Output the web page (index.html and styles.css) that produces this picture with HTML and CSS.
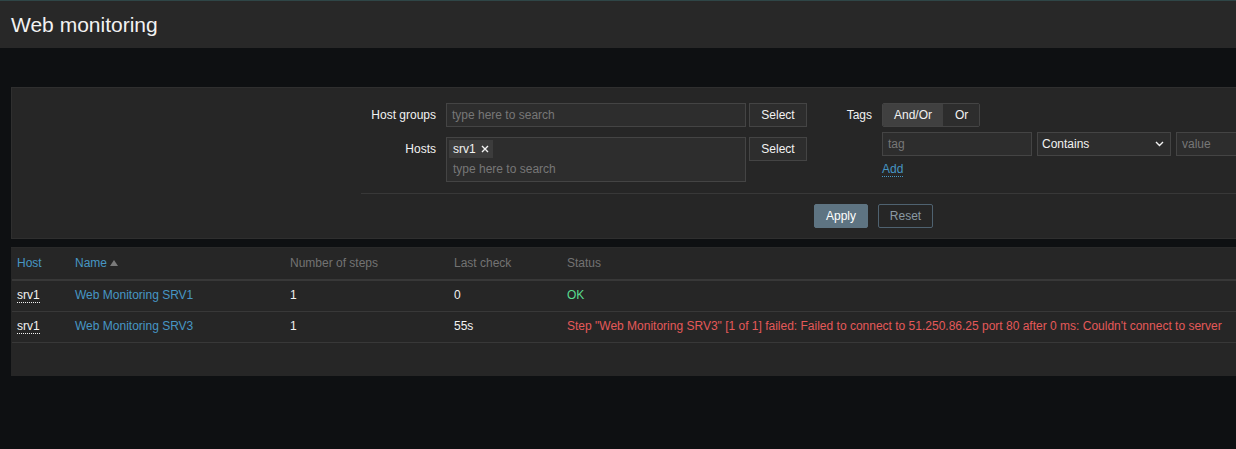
FILE: index.html
```html
<!DOCTYPE html>
<html lang="en">
<head>
<meta charset="utf-8">
<title>Web monitoring</title>
<link rel="stylesheet" href="styles.css">
</head>
<body>
<div class="page">
  <header class="page-header">
    <h1 class="page-title">Web monitoring</h1>
  </header>
  <main class="content">
    <section class="filter">
      <div class="filter-body">
        <div class="filter-col col-hosts">
          <div class="form-row">
            <label class="form-label label-hosts">Host groups</label>
            <div class="text-input wide"><span class="placeholder">type here to search</span></div>
            <button class="btn-select">Select</button>
          </div>
          <div class="form-row">
            <label class="form-label label-hosts">Hosts</label>
            <div class="multiselect wide">
              <span class="chip">srv1<svg class="chip-x" width="8" height="8" viewBox="0 0 8 8"><path d="M1 1L7 7M7 1L1 7" stroke="#f2f2f2" stroke-width="1.4"/></svg></span>
              <span class="placeholder ms-input">type here to search</span>
            </div>
            <button class="btn-select">Select</button>
          </div>
        </div>
        <div class="filter-col col-tags">
          <div class="form-row">
            <label class="form-label label-tags">Tags</label>
            <div class="tags-fields">
              <div class="radio-group">
                <span class="radio active">And/Or</span>
                <span class="radio">Or</span>
              </div>
              <div class="tag-row">
                <div class="text-input tag-input"><span class="placeholder">tag</span></div>
                <div class="select-box">
                  <span>Contains</span>
                  <svg width="9" height="6" viewBox="0 0 9 6"><path d="M1 1L4.5 4.5L8 1" fill="none" stroke="#f2f2f2" stroke-width="1.4"/></svg>
                </div>
                <div class="text-input value-input"><span class="placeholder">value</span></div>
              </div>
              <div class="add-row"><a class="link-add">Add</a></div>
            </div>
          </div>
        </div>
      </div>
      <div class="filter-buttons">
        <button class="btn-apply">Apply</button>
        <button class="btn-reset">Reset</button>
      </div>
    </section>

    <section class="list">
      <table class="list-table">
        <colgroup>
          <col class="c-host"><col class="c-name"><col class="c-steps"><col class="c-last"><col class="c-status">
        </colgroup>
        <thead>
          <tr>
            <th class="sortable">Host</th>
            <th class="sortable">Name<span class="sort-arrow"></span></th>
            <th>Number of steps</th>
            <th>Last check</th>
            <th>Status</th>
          </tr>
        </thead>
        <tbody>
          <tr>
            <td><span class="host-link">srv1</span></td>
            <td><a class="item-link">Web Monitoring SRV1</a></td>
            <td>1</td>
            <td>0</td>
            <td class="status-ok">OK</td>
          </tr>
          <tr>
            <td><span class="host-link">srv1</span></td>
            <td><a class="item-link">Web Monitoring SRV3</a></td>
            <td>1</td>
            <td>55s</td>
            <td class="status-fail">Step "Web Monitoring SRV3" [1 of 1] failed: Failed to connect to 51.250.86.25 port 80 after 0 ms: Couldn't connect to server</td>
          </tr>
        </tbody>
      </table>
      <div class="list-footer"></div>
    </section>
  </main>
</div>
</body>
</html>
```

FILE: styles.css
```css
* { box-sizing: border-box; }

html, body {
  margin: 0;
  background: #0e1012;
  overflow: hidden;
}

body {
  font: 12px "Liberation Sans", Arial, sans-serif;
  color: #f2f2f2;
}

.page {
  min-height: 449px;
}

.page-header {
  border-top: 1px solid #2f4647;
  background: #282828;
  height: 48px;
  padding-left: 11px;
  display: flex;
  align-items: center;
}

.page-title {
  margin: 0;
  font-size: 21px;
  font-weight: normal;
  color: #f2f2f2;
}

.content {
  padding: 39px 0 0 11px;
}

/* Filter */
.filter {
  background: #262626;
  border: 1px solid #2f2f2f;
  border-right: none;
  padding-top: 15px;
}

.filter-body {
  display: flex;
  margin-left: 349px;
  padding-bottom: 11px;
}

.filter-col {
  display: flex;
  flex-direction: column;
}

.col-hosts { gap: 10px; }

.form-row {
  display: flex;
  align-items: flex-start;
}

.form-label {
  line-height: 24px;
  text-align: right;
  color: #f2f2f2;
  white-space: nowrap;
}

.label-hosts { width: 75px; margin-right: 10px; }
.label-tags { width: 65px; margin-right: 10px; }

.text-input,
.multiselect,
.select-box {
  background: #2d2d2d;
  border: 1px solid #444;
}

.text-input {
  height: 24px;
  padding: 0 5px;
  display: flex;
  align-items: center;
  overflow: hidden;
  white-space: nowrap;
}

.wide { width: 300px; }

.placeholder { color: #777; }

.multiselect {
  height: 45px;
  padding: 2px 2px;
  display: flex;
  flex-direction: column;
  align-items: flex-start;
}

.chip {
  display: inline-flex;
  align-items: center;
  gap: 5px;
  height: 18px;
  padding: 0 4px;
  background: #3c3c3c;
  color: #f2f2f2;
}

.chip-x { display: block; }

.ms-input {
  line-height: 18px;
  margin-top: 2px;
  padding-left: 4px;
}

.btn-select {
  margin-left: 3px;
  width: 58px;
  height: 24px;
  background: #2d2d2d;
  border: 1px solid #444;
  color: #f2f2f2;
  font: inherit;
  padding: 0;
}

.tags-fields {
  display: flex;
  flex-direction: column;
  gap: 5px;
  width: 360px;
}

.radio-group {
  display: flex;
  height: 24px;
  border: 1px solid #444;
  border-radius: 2px;
  align-self: flex-start;
  overflow: hidden;
}

.radio {
  display: flex;
  align-items: center;
  padding: 0 11px 0 12px;
  background: #2d2d2d;
  color: #f2f2f2;
}

.radio.active {
  background: #404040;
  padding: 0 11px 0 11px;
}

.tag-row {
  display: flex;
  gap: 5px;
}

.tag-input { width: 150px; flex: none; }

.select-box {
  width: 134px;
  flex: none;
  height: 24px;
  padding: 0 6px 0 4px;
  display: flex;
  align-items: center;
  justify-content: space-between;
}

.value-input { width: 120px; flex: none; }

.add-row {
  line-height: 14px;
  padding-top: 1px;
}

.link-add {
  color: #4796c4;
  border-bottom: 1px dotted #4796c4;
}

.filter-buttons {
  margin-left: 349px;
  border-top: 1px solid #383838;
  padding: 10px 0 10px 453px;
  display: flex;
  gap: 10px;
}

.btn-apply,
.btn-reset {
  height: 24px;
  font: inherit;
  padding: 0;
  border-radius: 2px;
}

.btn-apply {
  width: 54px;
  background: #5e7482;
  border: 1px solid #5e7482;
  color: #fff;
}

.btn-reset {
  width: 55px;
  background: transparent;
  border: 1px solid #4f6270;
  color: #8a99a3;
}

/* List */
.list {
  margin-top: 8px;
  background: #262626;
  border-top: 1px solid #2a2a2a;
}

.list-table {
  width: 100%;
  border-collapse: collapse;
  table-layout: fixed;
  margin-left: 1px;
}

.c-host { width: 58px; }
.c-name { width: 215px; }
.c-steps { width: 164px; }
.c-last { width: 113px; }

.list-table th,
.list-table td {
  padding: 0 5px;
  text-align: left;
  vertical-align: middle;
  white-space: nowrap;
  font-weight: normal;
}

.list-table th { height: 32px; padding-bottom: 2px; }
.list-table td { height: 31px; padding-bottom: 1px; }

.list-table thead tr { border-bottom: 2px solid #383838; }
.list-table tbody tr { border-bottom: 1px solid #383838; }

.list-table th { color: #737373; }
.list-table th.sortable { color: #4796c4; }

.sort-arrow {
  display: inline-block;
  width: 0;
  height: 0;
  margin-left: 3px;
  border-left: 4px solid transparent;
  border-right: 4px solid transparent;
  border-bottom: 6px solid #7a7a7a;
  vertical-align: 1px;
}

.host-link {
  border-bottom: 1px dotted #f2f2f2;
}

.item-link { color: #4796c4; }

.status-ok { color: #59db8f; }
.status-fail { color: #e45959; }

.list-footer { height: 33px; }
```
